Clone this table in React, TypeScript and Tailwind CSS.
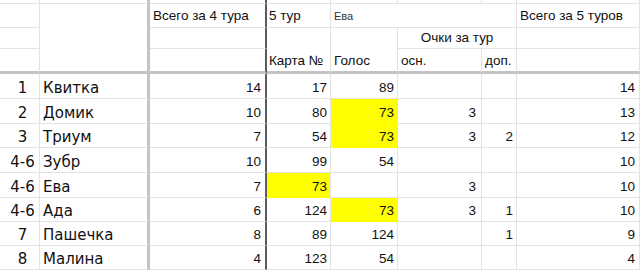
import React from "react";

// Column track widths include each cell's own right border.
const COLS = "grid-cols-[40px_110px_117px_64px_67px_84px_35px_123px]";
const ROWS =
  "grid-rows-[4px_24px_21px_25px_25px_25px_24px_25px_25px_24px_24px_24px]";

const LINE = "border-[#e2e2e2]";
const NUM = "font-['Liberation_Sans',Arial,sans-serif] text-[13.5px]";
const NAME = "font-['DejaVu_Sans',Verdana,sans-serif] text-[15px]";

type Row = {
  rank: string;
  name: string;
  prev: string;
  card: string;
  vote: string;
  main: string;
  extra: string;
  total: string;
  hl?: "card" | "vote";
};

const DATA: Row[] = [
  { rank: "1", name: "Квитка", prev: "14", card: "17", vote: "89", main: "", extra: "", total: "14" },
  { rank: "2", name: "Домик", prev: "10", card: "80", vote: "73", main: "3", extra: "", total: "13", hl: "vote" },
  { rank: "3", name: "Триум", prev: "7", card: "54", vote: "73", main: "3", extra: "2", total: "12", hl: "vote" },
  { rank: "4-6", name: "Зубр", prev: "10", card: "99", vote: "54", main: "", extra: "", total: "10" },
  { rank: "4-6", name: "Ева", prev: "7", card: "73", vote: "", main: "3", extra: "", total: "10", hl: "card" },
  { rank: "4-6", name: "Ада", prev: "6", card: "124", vote: "73", main: "3", extra: "1", total: "10", hl: "vote" },
  { rank: "7", name: "Пашечка", prev: "8", card: "89", vote: "124", main: "", extra: "1", total: "9" },
  { rank: "8", name: "Малина", prev: "4", card: "123", vote: "54", main: "", extra: "", total: "4" },
];

// Right border per column index (B thick grey, C dark).
function rightBorder(col: number) {
  if (col === 1) return "border-r-[3px] border-r-[#c4c4c4]";
  if (col === 2) return "border-r-2 border-r-[#5c5c5c]";
  return "border-r border-r-[#e2e2e2]";
}

function Cell({
  col,
  className = "",
  children,
  yellow,
}: {
  col: number;
  className?: string;
  children?: React.ReactNode;
  yellow?: boolean;
}) {
  return (
    <div
      className={`flex items-end overflow-hidden whitespace-nowrap border-b leading-[16px] text-[#111] ${
        yellow ? "border-b-[#ffff00] bg-[#ffff00]" : "border-b-[#e2e2e2]"
      } ${rightBorder(col)} ${className}`}
    >
      {children}
    </div>
  );
}

export default function App() {
  return (
    <div className={`grid h-[270px] w-[640px] overflow-hidden bg-white ${COLS} ${ROWS} ${LINE}`}>
      {/* partial row above the header */}
      {Array.from({ length: 8 }, (_, i) => (
        <Cell key={`top-${i}`} col={i} />
      ))}

      {/* header row 1 */}
      <Cell col={0} />
      <div
        className={`row-span-3 border-b-[3px] border-b-[#c4c4c4] ${rightBorder(1)}`}
      />
      <Cell col={2} className={`pb-[3px] pl-[3px] ${NUM}`}>
        Всего за 4 тура
      </Cell>
      <Cell col={3} className={`pb-[3px] pl-[2px] ${NUM}`}>
        5 тур
      </Cell>
      <Cell col={6} className="col-span-3 pb-[3px] pl-[3px] font-['Liberation_Sans',Arial,sans-serif] text-[11px] text-[#333]">
        Ева
      </Cell>
      <Cell col={7} className={`pb-[3px] pl-[3px] ${NUM}`}>
        Всего за 5 туров
      </Cell>

      {/* header row 2 */}
      <Cell col={0} />
      <Cell col={2} />
      <div
        className={`row-span-2 flex items-end border-b-[3px] border-b-[#c4c4c4] pb-[2px] pl-[2px] leading-[16px] text-[#111] ${NUM} ${rightBorder(3)}`}
      >
        Карта №
      </div>
      <div
        className={`row-span-2 flex items-end border-b-[3px] border-b-[#c4c4c4] pb-[2px] pl-[3px] leading-[16px] text-[#111] ${NUM} ${rightBorder(4)}`}
      >
        Голос
      </div>
      <Cell col={6} className={`col-span-2 justify-center pb-[2px] ${NUM}`}>
        Очки за тур
      </Cell>
      <Cell col={7} />

      {/* header row 3 */}
      {[0, 2, 5, 6, 7].map((c) => (
        <div
          key={`h3-${c}`}
          className={`flex items-end border-b-[3px] border-b-[#c4c4c4] pb-[2px] pl-[3px] leading-[16px] text-[#111] ${NUM} ${rightBorder(c)}`}
        >
          {c === 5 ? "осн." : c === 6 ? "доп." : ""}
        </div>
      ))}

      {/* data */}
      {DATA.map((r, i) => (
        <React.Fragment key={i}>
          <Cell col={0} className={`justify-center pb-[2px] pl-[6px] ${NAME}`}>
            {r.rank}
          </Cell>
          <Cell col={1} className={`pb-[2px] pl-[3px] ${NAME}`}>
            {r.name}
          </Cell>
          <Cell col={2} className={`justify-end pb-[2px] pr-[4px] ${NUM}`}>
            {r.prev}
          </Cell>
          <Cell col={3} yellow={r.hl === "card"} className={`justify-end pb-[2px] pr-[3px] ${NUM}`}>
            {r.card}
          </Cell>
          <Cell col={4} yellow={r.hl === "vote"} className={`justify-end pb-[2px] pr-[3px] ${NUM}`}>
            {r.vote}
          </Cell>
          <Cell col={5} className={`justify-end pb-[2px] pr-[5px] ${NUM}`}>
            {r.main}
          </Cell>
          <Cell col={6} className={`justify-end pb-[2px] pr-[3px] ${NUM}`}>
            {r.extra}
          </Cell>
          <Cell col={7} className={`justify-end pb-[2px] pr-[4px] ${NUM}`}>
            {r.total}
          </Cell>
        </React.Fragment>
      ))}
    </div>
  );
}
